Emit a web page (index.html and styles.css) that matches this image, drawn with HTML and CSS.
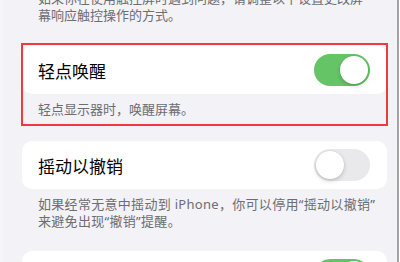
FILE: index.html
```html
<!DOCTYPE html>
<html lang="zh-CN">
<head>
<meta charset="utf-8">
<link rel="stylesheet" href="styles.css">
</head>
<body>
<div class="screen">
  <p class="footer top-footer">如果你在使用触控屏时遇到问题，请调整以下设置更改屏幕响应触控操作的方式。</p>

  <section class="group group-first">
    <div class="card">
      <span class="label">轻点唤醒</span>
      <span class="switch on"><span class="knob"></span></span>
    </div>
    <p class="footer">轻点显示器时，唤醒屏幕。</p>
    <div class="highlight"></div>
  </section>

  <section class="group group-second">
    <div class="card">
      <span class="label">摇动以撤销</span>
      <span class="switch off"><span class="knob"></span></span>
    </div>
    <p class="footer footer-wide">如果经常无意中摇动到 iPhone，你可以停用“摇动以撤销”<br>来避免出现“撤销”提醒。</p>
  </section>

  <section class="group">
    <div class="card">
      <span class="label"></span>
      <span class="switch on"><span class="knob"></span></span>
    </div>
  </section>
</div>
</body>
</html>
```

FILE: styles.css
```css
html, body {
  margin: 0;
  padding: 0;
  background: #ffffff;
  height: 262px;
  overflow: hidden;
}

.screen {
  box-sizing: border-box;
  width: 399px;
  height: 262px;
  border-left: 3px solid #f6f6f9;
  border-right: 2px solid #a2a2a4;
  background: #f2f2f7;
  padding: 0 10px 0 19px;
  font-family: "Noto Sans", "Noto Sans CJK SC", sans-serif;
  overflow: hidden;
}

.footer {
  margin: 0;
  padding: 0 16px;
  font-size: 13px;
  line-height: 17px;
  color: #6d6d72;
  white-space: nowrap;
}

.footer-wide {
  letter-spacing: 0.3px;
}

.top-footer {
  margin-top: -10px;
  margin-bottom: 22px;
  white-space: normal;
}

.group {
  position: relative;
}

.group-first {
  margin-bottom: 23px;
}

.group-second {
  margin-bottom: 21px;
}

.card {
  background: #ffffff;
  border-radius: 10px;
  height: 48px;
  display: flex;
  align-items: center;
  justify-content: space-between;
  padding: 0 17px 0 16px;
}

.label {
  font-size: 17px;
  color: #000000;
}

.group .footer {
  padding-top: 7px;
}

.switch {
  width: 56px;
  height: 32px;
  border-radius: 16px;
  display: flex;
  align-items: center;
  padding: 0 2px;
  box-sizing: border-box;
}

.switch.on {
  background: #65c466;
  justify-content: flex-end;
}

.switch.off {
  background: #e9e9eb;
  justify-content: flex-start;
}

.knob {
  width: 28px;
  height: 28px;
  border-radius: 50%;
  background: #ffffff;
  box-shadow: 0 2px 4px rgba(0, 0, 0, 0.18), 0 0 0 0.5px rgba(0, 0, 0, 0.06);
}

.highlight {
  position: absolute;
  left: -1px;
  right: -1px;
  top: -3px;
  bottom: -8px;
  border: 2px solid #ee3b3f;
  pointer-events: none;
}
```
